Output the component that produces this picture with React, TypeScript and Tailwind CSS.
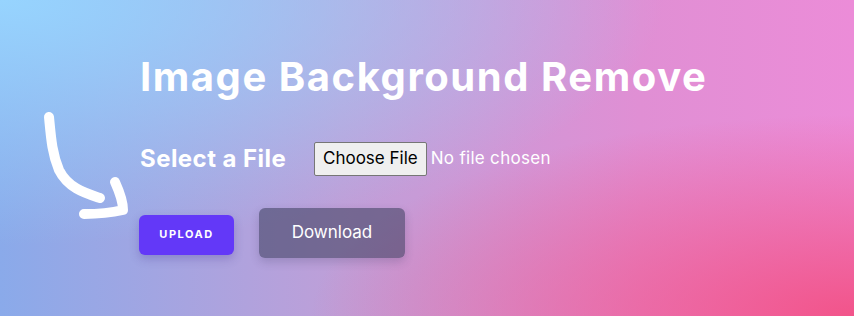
export default function App() {
  return (
    <div
      className="relative min-h-[316px] w-full overflow-hidden bg-[radial-gradient(ellipse_at_0%_0%,#97d4fe_0%,rgba(151,212,254,0)_55%),radial-gradient(ellipse_at_100%_100%,#f2548a_0%,rgba(242,84,138,0)_45%),linear-gradient(to_right,#8aaaea_0%,#bf9fd8_40%,#e08fd4_75%,#ec8cd8_100%)] pl-[139px] pt-[52px] font-['Inter','Noto_Sans',sans-serif] text-white"
    >
      <svg
        className="absolute left-[40px] top-[108px]"
        width="100"
        height="116"
        viewBox="0 0 100 116"
        fill="none"
        stroke="white"
        strokeWidth="10"
        strokeLinecap="round"
        strokeLinejoin="round"
      >
        <path d="M9 9 C 11 30, 12 45, 19 62 C 28 80, 45 85, 60 90" />
        <path d="M75 74 C 80 85, 83 96, 83 102 C 70 105, 55 106, 44 106" />
      </svg>

      <h1 className="pl-[1px] text-[40px] font-bold leading-[50px] tracking-[1.55px]">
        Image Background Remove
      </h1>

      <div className="mt-[40px] flex items-center pl-[1px]">
        <span className="w-[174px] text-[24px] font-bold leading-[30px] tracking-[0.45px]">
          Select a File
        </span>
        <input
          type="file"
          className="text-[17px] tracking-[0.3px] text-white file:mr-[4px] file:rounded-[2px] file:border file:border-solid file:border-[#767676] file:bg-[#efefef] file:px-[8px] file:py-[3px] file:text-[17px] file:tracking-normal file:text-black"
        />
      </div>

      <div className="mt-[32px] flex items-start gap-[25px]">
        <button className="mt-[7px] h-[40px] w-[95px] rounded-[6px] bg-[#6338f8] text-[11px] font-bold tracking-[1.5px] text-white shadow-[0_4px_10px_rgba(60,40,140,0.25)]">
          UPLOAD
        </button>
        <button className="h-[50px] w-[146px] rounded-[6px] bg-[rgba(55,58,90,0.55)] text-[17px] text-white shadow-[0_4px_10px_rgba(40,40,80,0.2)]">
          Download
        </button>
      </div>
    </div>
  );
}
